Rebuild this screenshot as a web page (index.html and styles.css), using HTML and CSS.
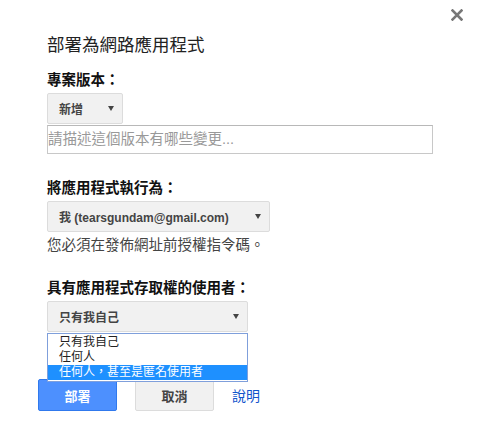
FILE: index.html
```html
<!DOCTYPE html>
<html lang="zh-Hant">
  <head>
    <meta charset="utf-8">
    <title>部署為網路應用程式</title>
    <link rel="stylesheet" href="styles.css">
  </head>
  <body>
    <div class="topbar">
      <svg class="close" width="12" height="12" viewBox="0 0 12 12">
        <path d="M1.5 1.5 L10.5 10.5 M10.5 1.5 L1.5 10.5" stroke="#777" stroke-width="2.6" stroke-linecap="square"/>
      </svg>
    </div>

    <div class="content">
      <h1 class="title">部署為網路應用程式</h1>

      <div class="label">專案版本：</div>
      <div class="select sel-version">
        <span>新增</span>
        <span class="arrow"></span>
      </div>
      <div class="textbox">請描述這個版本有哪些變更...</div>

      <div class="label section">將應用程式執行為：</div>
      <div class="select sel-exec">
        <span>我 (tearsgundam@gmail.com)</span>
        <span class="arrow"></span>
      </div>
      <div class="note">您必須在發佈網址前授權指令碼。</div>

      <div class="label section">具有應用程式存取權的使用者：</div>
      <div class="dropwrap">
        <div class="select sel-access">
          <span>只有我自己</span>
          <span class="arrow"></span>
        </div>
        <ul class="droplist">
          <li>只有我自己</li>
          <li>任何人</li>
          <li class="hilite">任何人，甚至是匿名使用者</li>
        </ul>
      </div>

      <div class="buttons">
        <button class="btn btn-blue">部署</button>
        <button class="btn btn-gray">取消</button>
        <a href="#" class="help">說明</a>
      </div>
    </div>
  </body>
</html>
```

FILE: styles.css
```css
body {
  margin: 0;
  background: #fff;
  color: #222;
  font-family: "Liberation Sans", "Noto Sans CJK TC", sans-serif;
}

.topbar {
  display: flex;
  justify-content: flex-end;
  box-sizing: border-box;
  height: 33px;
  padding: 9px 14px 0 0;
}

.content {
  padding-left: 47px;
}

.title {
  margin: 0 0 14px 0;
  font-size: 17.5px;
  font-weight: normal;
  line-height: 24px;
  color: #222;
}

.label {
  font-size: 14.5px;
  font-weight: bold;
  line-height: 18px;
  color: #111;
  margin-bottom: 4px;
}

.section {
  margin-top: 25px;
}

.select {
  display: flex;
  align-items: center;
  justify-content: space-between;
  box-sizing: border-box;
  height: 31px;
  padding: 0 8px 0 11px;
  background: #f1f1f1;
  border: 1px solid #dcdcdc;
  border-radius: 2px;
  font-size: 12px;
  font-weight: bold;
  color: #444;
}

.arrow {
  width: 0;
  height: 0;
  border-left: 3.5px solid transparent;
  border-right: 3.5px solid transparent;
  border-top: 5px solid #444;
}

.sel-version {
  width: 76px;
  margin-bottom: 1px;
}

.sel-exec {
  width: 223px;
}

.sel-access {
  width: 201px;
}

.textbox {
  box-sizing: border-box;
  width: 386px;
  height: 29px;
  padding-left: 0;
  border: 1px solid #c8c8c8;
  border-top-color: #b8b8b8;
  font-size: 14.5px;
  line-height: 27px;
  color: #999;
}

.note {
  margin-top: 4px;
  font-size: 14.5px;
  line-height: 18px;
  color: #444;
}

.dropwrap {
  position: relative;
}

.droplist {
  position: absolute;
  top: 100%;
  left: 0;
  box-sizing: border-box;
  width: 201px;
  margin: 1px 0 0 0;
  padding: 1px 0 1px 0;
  list-style: none;
  background: #fff;
  border: 1px solid #7f9fdb;
  font-size: 12px;
  line-height: 15px;
  color: #222;
}

.droplist li {
  padding-left: 11px;
}

.droplist .hilite {
  background: #1e90ff;
  color: #fff;
}

.buttons {
  display: flex;
  align-items: center;
  gap: 18px;
  margin: 47px 0 0 -9px;
}

.btn {
  box-sizing: border-box;
  width: 79px;
  height: 32px;
  border-radius: 2px;
  font-family: "Liberation Sans", "Noto Sans CJK TC", sans-serif;
  font-size: 13px;
  font-weight: bold;
}

.btn-blue {
  background: #4d90fe;
  border: 1px solid #3079ed;
  color: #fff;
}

.btn-gray {
  background: #f1f1f1;
  border: 1px solid #dcdcdc;
  color: #444;
}

.help {
  font-size: 14px;
  color: #15c;
  text-decoration: none;
}
```
